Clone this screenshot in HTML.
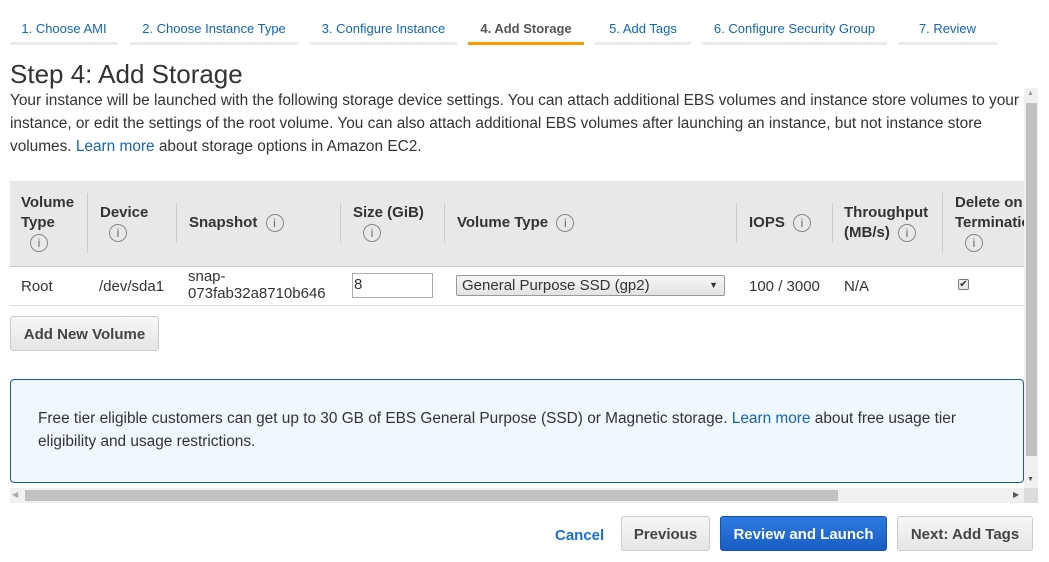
<!DOCTYPE html>
<html><head><style>
*{margin:0;padding:0;box-sizing:border-box}
body{width:1049px;height:562px;overflow:hidden;background:#fff;font-family:"Liberation Sans",Arial,sans-serif;color:#333;position:relative}
.a{position:absolute}
.tab{position:absolute;top:20px;height:25px;border-bottom:3px solid #eaeaea;font-size:13px;color:#1166bb;text-align:center;line-height:17px}
.tab.on{border-color:#f90;color:#555;font-weight:bold}
.p{font-size:15.4px;line-height:23px}
a{color:#1166bb;text-decoration:none}
.th{position:absolute;font-size:15px;font-weight:bold;line-height:20px;color:#333}
.i{display:inline-block;width:18px;height:18px;border:1px solid #888;border-radius:50%;font-size:12px;font-weight:normal;text-align:center;line-height:16px;color:#666;vertical-align:middle;font-family:"Liberation Sans",sans-serif}
.sep{position:absolute;width:1px;background:#ccc}
.td{position:absolute;font-size:15px;color:#333;line-height:17px}
.btn{position:absolute;height:35px;border:1px solid #ccc;border-radius:3px;background:linear-gradient(#f7f7f7,#e5e5e5);font-weight:bold;font-size:15px;color:#444;text-align:center;line-height:35px}
</style></head><body>
<div class="tab" style="left:10px;width:108px">1. Choose AMI</div>
<div class="tab" style="left:130px;width:168px">2. Choose Instance Type</div>
<div class="tab" style="left:310px;width:147px">3. Configure Instance</div>
<div class="tab on" style="left:468px;width:116px">4. Add Storage</div>
<div class="tab" style="left:595px;width:96px">5. Add Tags</div>
<div class="tab" style="left:702px;width:185px">6. Configure Security Group</div>
<div class="tab" style="left:898px;width:99px">7. Review</div>

<div class="a" style="left:10px;top:59px;font-size:26px;color:#333">Step 4: Add Storage</div>
<div class="a p" style="left:10px;top:89px;width:1018px">Your instance will be launched with the following storage device settings. You can attach additional EBS volumes and instance store volumes to your instance, or edit the settings of the root volume. You can also attach additional EBS volumes after launching an instance, but not instance store volumes. <a>Learn more</a> about storage options in Amazon EC2.</div>

<div class="a" style="left:10px;top:181px;width:1014px;height:86px;background:#e8e8e8"></div>
<div class="a" style="left:10px;top:266px;width:1014px;height:1px;background:#ccc"></div>
<div class="a" style="left:10px;top:305px;width:1014px;height:1px;background:#ddd"></div>
<div class="sep" style="left:87px;top:193px;height:60px"></div>
<div class="sep" style="left:176px;top:203px;height:40px"></div>
<div class="sep" style="left:340px;top:203px;height:40px"></div>
<div class="sep" style="left:444px;top:203px;height:40px"></div>
<div class="sep" style="left:736px;top:203px;height:40px"></div>
<div class="sep" style="left:832px;top:203px;height:40px"></div>
<div class="sep" style="left:942px;top:193px;height:60px"></div>

<div class="th" style="left:21px;top:193px">Volume<br>Type<br><span class="i" style="margin-left:9px">i</span></div>
<div class="th" style="left:100px;top:203px">Device<br><span class="i" style="margin-left:9px">i</span></div>
<div class="th" style="left:189px;top:213px">Snapshot <span class="i" style="margin-left:4px">i</span></div>
<div class="th" style="left:353px;top:203px">Size (GiB)<br><span class="i" style="margin-left:10px">i</span></div>
<div class="th" style="left:457px;top:213px">Volume Type <span class="i" style="margin-left:4px">i</span></div>
<div class="th" style="left:749px;top:213px">IOPS <span class="i" style="margin-left:4px">i</span></div>
<div class="th" style="left:844px;top:203px">Throughput<br>(MB/s) <span class="i" style="margin-left:4px">i</span></div>
<div class="th" style="left:955px;top:193px;width:69px;overflow:hidden;white-space:nowrap">Delete on<br>Termination<br><span class="i" style="margin-left:10px">i</span></div>

<div class="td" style="left:21px;top:278px">Root</div>
<div class="td" style="left:99px;top:278px">/dev/sda1</div>
<div class="td" style="left:188px;top:268px">snap-<br>073fab32a8710b646</div>
<div class="a" style="left:352px;top:273px;width:81px;height:25px;border:1px solid #aaa;font-size:15px;padding:2px 1px">8</div>
<div class="a" style="left:456px;top:275px;width:269px;height:21px;border:1px solid #999;border-radius:2px;background:linear-gradient(#f5f5f5,#e3e3e3);font-size:15px;line-height:19px;padding-left:5px">General Purpose SSD (gp2)<span style="position:absolute;right:6px;top:0;font-size:9px">▼</span></div>
<div class="td" style="left:749px;top:278px">100 / 3000</div>
<div class="td" style="left:844px;top:278px">N/A</div>
<div class="a" style="left:958px;top:279px;width:11px;height:11px;border:1px solid #777;border-radius:2px;background:#eee;font-size:10px;line-height:9px;text-align:center">✔</div>

<div class="btn" style="left:10px;top:316px;width:149px">Add New Volume</div>

<div class="a" style="left:10px;top:379px;width:1014px;height:104px;background:#f0f7ff;border:1px solid #1a5ab0;border-radius:4px"></div>
<div class="a p" style="left:38px;top:407px;width:960px;color:#333">Free tier eligible customers can get up to 30 GB of EBS General Purpose (SSD) or Magnetic storage. <a>Learn more</a> about free usage tier eligibility and usage restrictions.</div>

<div class="a" style="left:1024px;top:88px;width:14px;height:400px;background:#f0f0f0"></div>
<div class="a" style="left:1026px;top:103px;width:11px;height:353px;background:#c1c1c1"></div>
<div class="a" style="left:1027px;top:90px;font-size:7px;color:#999">▲</div>
<div class="a" style="left:1027px;top:476px;font-size:7px;color:#555">▼</div>
<div class="a" style="left:10px;top:488px;width:1028px;height:15px;background:#f0f0f0"></div>
<div class="a" style="left:1024px;top:488px;width:14px;height:15px;background:#dcdcdc"></div>
<div class="a" style="left:25px;top:490px;width:813px;height:11px;background:#c1c1c1"></div>
<div class="a" style="left:12px;top:490px;font-size:8px;color:#aaa">◀</div>
<div class="a" style="left:1013px;top:490px;font-size:8px;color:#555">▶</div>

<div class="a" style="left:555px;top:527px;font-size:15px;font-weight:bold;color:#1a6fd0">Cancel</div>
<div class="btn" style="left:621px;top:516px;width:89px">Previous</div>
<div class="btn" style="left:720px;top:516px;width:167px;background:linear-gradient(#2d7ae0,#1a5dc4);border-color:#1a50b0;color:#fff">Review and Launch</div>
<div class="btn" style="left:897px;top:516px;width:136px">Next: Add Tags</div>
</body></html>
